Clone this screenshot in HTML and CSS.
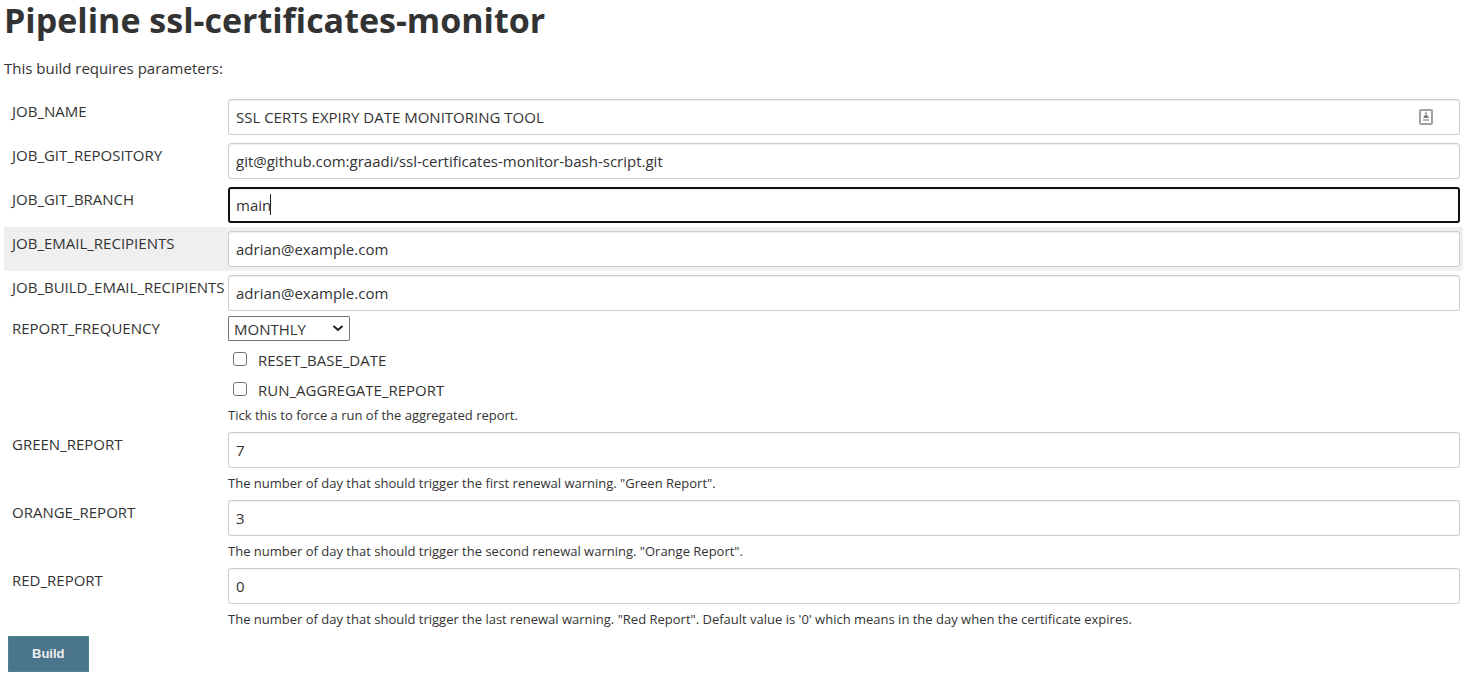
FILE: index.html
```html
<!DOCTYPE html>
<html lang="en">
<head>
<meta charset="utf-8">
<meta name="viewport" content="width=device-width, initial-scale=1">
<title>Pipeline ssl-certificates-monitor</title>
<link rel="stylesheet" href="styles.css">
</head>
<body>
<main class="page">
  <h1 class="title">Pipeline ssl-certificates-monitor</h1>
  <p class="intro">This build requires parameters:</p>
  <form class="parameters">
    <div class="row">
      <label class="name" for="job-name">JOB_NAME</label>
      <div class="setting with-icon">
        <input class="text" id="job-name" type="text" value="SSL CERTS EXPIRY DATE MONITORING TOOL">
        <svg class="autofill" viewBox="0 0 14 16" aria-hidden="true">
          <rect x="1" y="1" width="12" height="14" rx="1" fill="#fff" stroke="#a0a0a0" stroke-width="2"/>
          <circle cx="7" cy="4.500" r="1.200" fill="#999"/>
          <path d="M4.500 9V8Q5 6 7 6T9.500 8V9Z" fill="#777"/>
          <path d="M4 11H10" stroke="#b5b5b5" stroke-width="2"/>
        </svg>
      </div>
    </div>
    <div class="row">
      <label class="name" for="job-repo">JOB_GIT_REPOSITORY</label>
      <div class="setting"><input class="text" id="job-repo" type="text" value="git@github.com:graadi/ssl-certificates-monitor-bash-script.git"></div>
    </div>
    <div class="row">
      <label class="name" for="job-branch">JOB_GIT_BRANCH</label>
      <div class="setting with-caret">
        <input class="text" id="job-branch" type="text" value="main" autofocus>
        <span class="caret" aria-hidden="true"></span>
      </div>
    </div>
    <div class="row row-active">
      <label class="name" for="job-email">JOB_EMAIL_RECIPIENTS</label>
      <div class="setting"><input class="text" id="job-email" type="text" value="adrian@example.com"></div>
    </div>
    <div class="row">
      <label class="name" for="job-build-email">JOB_BUILD_EMAIL_RECIPIENTS</label>
      <div class="setting"><input class="text" id="job-build-email" type="text" value="adrian@example.com"></div>
    </div>
    <div class="row row-select">
      <label class="name" for="frequency">REPORT_FREQUENCY</label>
      <div class="setting with-select">
        <select class="select" id="frequency"><option>MONTHLY</option></select>
        <svg class="chevron" viewBox="0 0 12 8" aria-hidden="true"><path d="M1.500 2L6 6L10.500 2" fill="none" stroke="#222" stroke-width="2"/></svg>
      </div>
    </div>
    <div class="row row-check">
      <div class="setting check">
        <input class="box" id="reset" type="checkbox"><label for="reset">RESET_BASE_DATE</label>
      </div>
    </div>
    <div class="row row-check">
      <div class="setting check">
        <input class="box" id="aggregate" type="checkbox"><label for="aggregate">RUN_AGGREGATE_REPORT</label>
      </div>
      <p class="help">Tick this to force a run of the aggregated report.</p>
    </div>
    <div class="row row-help">
      <label class="name" for="green">GREEN_REPORT</label>
      <div class="setting"><input class="text" id="green" type="text" value="7"></div>
      <p class="help">The number of day that should trigger the first renewal warning. "Green Report".</p>
    </div>
    <div class="row row-help">
      <label class="name" for="orange">ORANGE_REPORT</label>
      <div class="setting"><input class="text" id="orange" type="text" value="3"></div>
      <p class="help">The number of day that should trigger the second renewal warning. "Orange Report".</p>
    </div>
    <div class="row row-help">
      <label class="name" for="red">RED_REPORT</label>
      <div class="setting"><input class="text" id="red" type="text" value="0"></div>
      <p class="help">The number of day that should trigger the last renewal warning. "Red Report". Default value is '0' which means in the day when the certificate expires.</p>
    </div>
    <button class="build" type="button">Build</button>
  </form>
</main>
</body>
</html>
```
FILE: styles.css
```css
* { box-sizing: border-box; }
body {
  margin: 0;
  background: #fff;
  color: #333;
  font: 15px/20px "Open Sans", "Noto Sans", sans-serif;
}
.page { padding: 0 4px; }
.title {
  margin: 0;
  font-size: 34px;
  line-height: 40px;
  font-weight: 700;
}
.intro { margin: 18px 0 17px; }
.row {
  display: grid;
  grid-template-columns: 216px minmax(0, 1fr);
  padding: 4px 3px 4px 8px;
}
.row-active { background: #efefef; }
.name { padding-top: 2px; white-space: nowrap; }
.setting { grid-column: 2; min-width: 0; }
.text {
  display: block;
  width: 100%;
  height: 36px;
  padding: 0 7px;
  border: 1px solid #ccc;
  border-radius: 3px;
  background: #fff;
  box-shadow: inset 0 1px 1px rgba(0, 0, 0, 0.075);
  color: #333;
  font: inherit;
}
.text:focus {
  padding: 0 6px;
  border: 2px solid #101010;
  outline: none;
}
.with-icon, .with-select, .with-caret { position: relative; }
.with-caret .text { caret-color: transparent; }
.caret {
  position: absolute;
  top: 7px;
  left: 42px;
  width: 1px;
  height: 21px;
  background: #222;
  visibility: hidden;
}
.text:focus + .caret { visibility: visible; }
.autofill {
  position: absolute;
  top: 10px;
  right: 27px;
  width: 14px;
  height: 16px;
}
.row-select { padding-top: 1px; }
.with-select { justify-self: start; }
.select {
  display: block;
  appearance: none;
  width: 122px;
  height: 25px;
  padding: 0 5px;
  border: 1px solid #767676;
  border-radius: 1px;
  background: #fff;
  color: #333;
  font: inherit;
}
.chevron {
  position: absolute;
  top: 8px;
  right: 6px;
  width: 12px;
  height: 8px;
  pointer-events: none;
}
.row-check { padding-top: 0; padding-bottom: 0; }
.check {
  display: flex;
  align-items: center;
  gap: 11px;
  height: 30px;
  padding-left: 5px;
}
.box {
  appearance: none;
  width: 14px;
  height: 14px;
  margin: 0 0 2px;
  border: 1px solid #767676;
  border-radius: 3px;
  background: #fff;
}
.box:checked { background: #4b758b; }
.help {
  grid-column: 2;
  margin: 0;
  padding-bottom: 3px;
  font-size: 13px;
  line-height: 20px;
}
.row-help { padding-bottom: 0; }
.row-help .help { margin-top: 5px; }
.build {
  display: block;
  margin: 4px;
  padding: 0 23px;
  height: 36px;
  border: 1px solid #4b8095;
  background: #4b758b;
  color: #eee;
  font: bold 13px/20px "Liberation Sans", Arial, sans-serif;
}
```
